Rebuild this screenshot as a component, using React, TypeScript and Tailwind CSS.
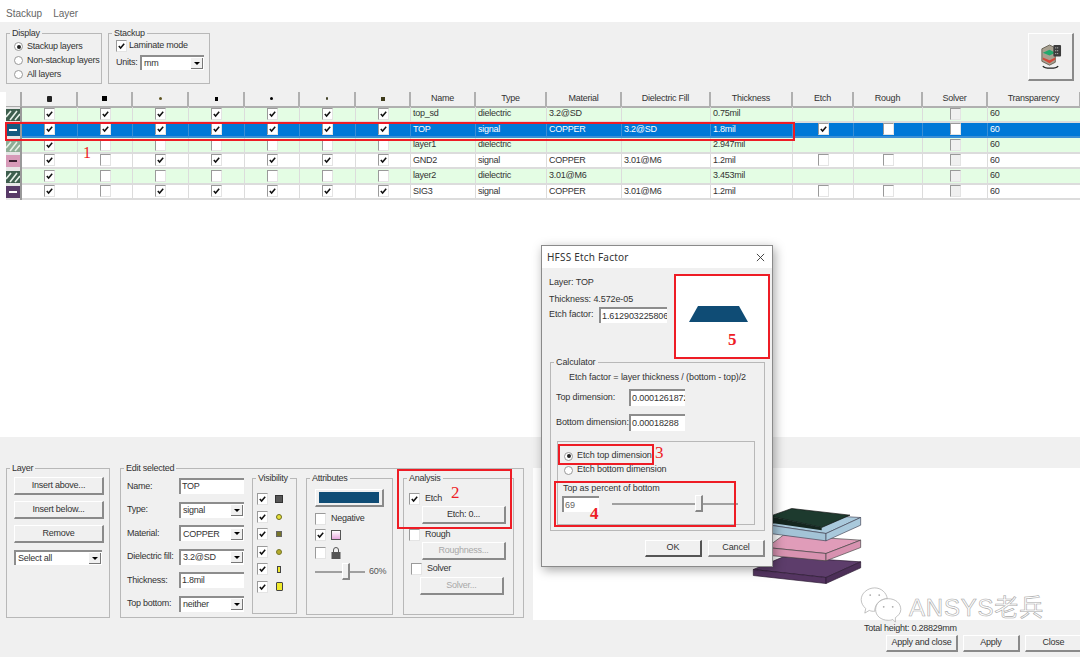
import React from 'react'

const columns = 'grid-cols-[16px_56px_55px_56px_56px_55px_56px_55px_65px_71px_75px_89px_82px_61px_69px_65px_93px]'

const rows = [
    { name: 'top_sd', type: 'dielectric', material: '3.2@SD', fill: '', thickness: '0.75mil', checks: [1, 1, 1, 1, 1, 1, 1] },
    { name: 'TOP', type: 'signal', material: 'COPPER', fill: '3.2@SD', thickness: '1.8mil', checks: [1, 1, 1, 1, 1, 1, 1], selected: true },
    { name: 'layer1', type: 'dielectric', material: '', fill: '', thickness: '2.947mil', checks: [1, 0, 0, 0, 0, 0, 0], light: true },
    { name: 'GND2', type: 'signal', material: 'COPPER', fill: '3.01@M6', thickness: '1.2mil', checks: [1, 0, 1, 1, 1, 1, 1], swatch: 'bg-[#d79ab8]' },
    { name: 'layer2', type: 'dielectric', material: '3.01@M6', fill: '', thickness: '3.453mil', checks: [1, 0, 0, 0, 0, 0, 0] },
    { name: 'SIG3', type: 'signal', material: 'COPPER', fill: '3.01@M6', thickness: '1.2mil', checks: [1, 0, 1, 1, 1, 1, 1], swatch: 'bg-[#583a68]', lightBar: true },
]

const Tick = () => (
    <svg viewBox="0 0 10 10" className="w-full h-full">
        <path d="M2 5l2 2.2L8 2.6" fill="none" stroke="#111" strokeWidth="1.7" />
    </svg>
)

const Check = ({ on = false, off = false }: { on?: boolean; off?: boolean }) => (
    <span className={`block w-[11px] h-[12px] shrink-0 border-t border-l border-r border-b border-t-[#9a9a9a] border-l-[#9a9a9a] border-r-[#e4e4e4] border-b-[#e4e4e4] ${off ? 'bg-[#f0f0f0]' : 'bg-white'}`}>
        {on && <Tick />}
    </span>
)

const Radio = ({ on = false }: { on?: boolean }) => (
    <span className="flex items-center justify-center w-[9px] h-[9px] shrink-0 rounded-full border border-[#999] bg-white">
        {on && <span className="block w-[4px] h-[4px] rounded-full bg-[#222]" />}
    </span>
)

const Btn = ({ children, className = '', off = false }: { children: React.ReactNode; className?: string; off?: boolean }) => (
    <div className={`flex items-center justify-center whitespace-nowrap bg-[#f0f0f0] border-t border-l border-r-2 border-b-2 border-t-white border-l-white border-r-[#8a8a8a] border-b-[#8a8a8a] ${off ? 'text-[#a8a8a8]' : 'text-[#333]'} ${className}`}>
        {children}
    </div>
)

const Field = ({ value, className = '' }: { value: string; className?: string }) => (
    <div className={`bg-white border-t-2 border-l-2 border-[#8d8d8d] pl-[1px] leading-[12px] overflow-hidden whitespace-nowrap text-[#333] ${className}`}>
        {value}
    </div>
)

const Select = ({ value, className = '' }: { value: string; className?: string }) => (
    <div className={`flex items-center bg-white border-t-2 border-l-2 border-[#8d8d8d] pl-[2px] text-[#333] ${className}`}>
        <span className="flex-1">{value}</span>
        <span className="flex items-center justify-center w-[12px] h-[11px] mr-[1px] bg-[#f0f0f0] border-r border-b border-[#777]">
            <span className="block w-0 h-0 border-x-[3px] border-t-[3px] border-x-transparent border-t-black" />
        </span>
    </div>
)

const Group = ({ title, className = '', children }: { title: string; className?: string; children: React.ReactNode }) => (
    <fieldset className={`border border-[#b8b8b8] ${className}`}>
        <legend className="ml-[3px] px-[2px] leading-[12px] text-[#333]">{title}</legend>
        {children}
    </fieldset>
)

const Slider = ({ className = '', thumb }: { className?: string; thumb: string }) => (
    <div className={`relative flex items-center ${className}`}>
        <div className="w-full h-[2px] bg-[#a0a0a0]" />
        <div className={`absolute top-0 w-[8px] h-[17px] bg-[#f0f0f0] border-r-2 border-b-2 border-[#888] border-t border-l border-t-white border-l-white ${thumb}`} />
    </div>
)

const Hatch = ({ light = false }: { light?: boolean }) => (
    <svg viewBox="0 0 14 12" className="w-[14px] h-[12px]">
        <rect width="14" height="12" fill={light ? '#8fae96' : '#3e5f4e'} />
        <path d="M0 8l5-6M4 11l7-9M9 11l5-6" stroke={light ? '#e6f2e6' : '#e8f2ea'} strokeWidth="1.6" />
    </svg>
)

const RowIcon = ({ row }: { row: (typeof rows)[number] }) => {
    if (row.type === 'dielectric') return <Hatch light={row.light} />
    const bg = row.selected ? 'bg-[#145a80]' : row.swatch
    const bar = row.selected || row.lightBar ? 'bg-white' : 'bg-[#3a2030]'
    return (
        <span className={`flex items-center justify-center w-[14px] h-[12px] ${bg}`}>
            <span className={`block w-[8px] h-[2px] ${bar}`} />
        </span>
    )
}

const headIcons = [
    'w-[5px] h-[6px] bg-[#222] rounded-[1px]',
    'w-[5px] h-[5px] bg-black',
    'w-[3px] h-[3px] bg-[#5f5420] rounded-full',
    'w-[3px] h-[4px] bg-black',
    'w-[3px] h-[3px] bg-black rounded-full',
    'w-[2px] h-[3px] bg-[#44442a] rounded-full',
    'w-[4px] h-[4px] bg-[#3e3a1a]',
]

const Table = () => (
    <div className="bg-white h-[345px] pl-[6px] text-[9px] text-[#333]">
        <div className={`grid ${columns} h-[15px]`}>
            <div className="bg-[#f0f0f0] border-r-2 border-b-2 border-[#aaa]" />
            {headIcons.map((c, i) => (
                <div key={i} className="flex items-center justify-center bg-[#f0f0f0] border-r-2 border-b-2 border-[#b0b0b0]">
                    <span className={`block ${c}`} />
                </div>
            ))}
            {['Name', 'Type', 'Material', 'Dielectric Fill', 'Thickness', 'Etch', 'Rough', 'Solver', 'Transparency'].map((h) => (
                <div key={h} className="flex items-center justify-center bg-[#f0f0f0] border-r-2 border-b-2 border-[#b0b0b0]">{h}</div>
            ))}
        </div>
        {rows.map((row) => {
            const bg = row.selected ? 'bg-[#0078d7] text-white' : row.type === 'dielectric' ? 'bg-[#e4fde4]' : 'bg-white'
            const cell = `flex items-center border-r border-b-2 ${row.selected ? 'border-[#3b8fd6]' : 'border-[#dcdcdc]'}`
            return (
                <div key={row.name} className={`grid ${columns} h-[15.5px] ${bg}`}>
                    <div className="flex items-center justify-center bg-[#e6e6e6] border-r-2 border-[#999]"><RowIcon row={row} /></div>
                    {row.checks.map((c, i) => (
                        <div key={i} className={`${cell} justify-center`}><Check on={!!c} /></div>
                    ))}
                    <div className={`${cell} pl-[2px]`}>{row.name}</div>
                    <div className={`${cell} pl-[2px]`}>{row.type}</div>
                    <div className={`${cell} pl-[2px]`}>{row.material}</div>
                    <div className={`${cell} pl-[2px]`}>{row.fill}</div>
                    <div className={`${cell} pl-[2px]`}>{row.thickness}</div>
                    <div className={`${cell} justify-center`}>{row.type === 'signal' && <Check on={row.selected} />}</div>
                    <div className={`${cell} justify-center`}>{row.type === 'signal' && <Check />}</div>
                    <div className={`${cell} justify-center`}><Check off={!row.selected} /></div>
                    <div className={`${cell} pl-[2px]`}>60</div>
                </div>
            )
        })}
    </div>
)

const TopBar = () => (
    <div className="flex items-start h-[70px] bg-[#f0f0f0] pl-[6px] pr-[6px] pt-[5px] gap-[6px] text-[9px] text-[#333] whitespace-nowrap">
        <Group title="Display" className="w-[96px] h-[57px]">
            <div className="flex flex-col gap-[3px] pl-[7px] pt-[2px]">
                <div className="flex items-center gap-[4px] h-[11px]"><Radio on />Stackup layers</div>
                <div className="flex items-center gap-[4px] h-[11px]"><Radio />Non-stackup layers</div>
                <div className="flex items-center gap-[4px] h-[11px]"><Radio />All layers</div>
            </div>
        </Group>
        <Group title="Stackup" className="w-[102px] h-[57px]">
            <div className="flex flex-col gap-[3px] pl-[7px] pt-[1px]">
                <div className="flex items-center gap-[2px] h-[12px]"><Check on />Laminate mode</div>
                <div className="flex items-center"><span className="w-[24px]">Units:</span><Select value="mm" className="w-[64px] h-[15px]" /></div>
            </div>
        </Group>
        <div className="ml-auto mt-[6px]">
            <Btn className="w-[46px] h-[48px]">
                <svg viewBox="0 0 24 28" className="w-[23px] h-[27px]">
                    <path d="M3 6l8-4 6 3v15l-6 3-8-4z" fill="#a8a090" stroke="#6a6458" />
                    <path d="M4 10l7-3 6 3-6 3z" fill="#23a86d" />
                    <path d="M4 15l7 3 6-3v2l-6 4-7-4z" fill="#d3493a" />
                    <rect x="15" y="2" width="8" height="12" rx="1" fill="#3c3c3c" />
                    <path d="M17 5h4M17 8h4M17 11h4" stroke="#ddd" strokeDasharray="1 1" />
                    <path d="M4 24c2 3 14 3 16 0" fill="none" stroke="#222" strokeWidth="1.3" />
                </svg>
            </Btn>
        </div>
    </div>
)

const LayerGroup = () => (
    <Group title="Layer" className="w-[104px] h-[156px]">
        <div className="flex flex-col gap-[6px] pl-[7px] pt-[3px]">
            <Btn className="w-[90px] h-[18px]">Insert above...</Btn>
            <Btn className="w-[90px] h-[18px]">Insert below...</Btn>
            <Btn className="w-[90px] h-[18px]">Remove</Btn>
            <Select value="Select all" className="w-[88px] h-[15px] mt-[1px]" />
        </div>
    </Group>
)

const editRows = [
    { label: 'Name:', value: 'TOP' },
    { label: 'Type:', value: 'signal', select: true },
    { label: 'Material:', value: 'COPPER', select: true },
    { label: 'Dielectric fill:', value: '3.2@SD', select: true },
    { label: 'Thickness:', value: '1.8mil' },
    { label: 'Top bottom:', value: 'neither', select: true },
]

const visIcons = [
    <span className="block w-[8px] h-[8px] bg-[#555] border border-[#333]" />,
    <span className="block w-[6px] h-[6px] bg-[#e6e03a] border border-[#6b6b20] rounded-full" />,
    <span className="block w-[6px] h-[6px] bg-[#77752a] border border-[#666]" />,
    <span className="block w-[6px] h-[6px] bg-[#b5ab2a] border border-[#77772a] rounded-full" />,
    <span className="block w-[4px] h-[7px] bg-[#f0ea2a] border border-[#444]" />,
    <span className="block w-[7px] h-[9px] bg-[#f0ea2a] border border-[#444] rounded-[1px]" />,
]

const EditGroup = () => (
    <Group title="Edit selected" className="w-[404px] h-[156px]">
        <div className="flex">
            <div className="flex flex-col gap-[7px] w-[131px] shrink-0 pl-[6px] pt-[4px]">
                {editRows.map((r) => (
                    <div key={r.label} className="flex items-center h-[16.5px] whitespace-nowrap">
                        <span className="w-[52px] shrink-0">{r.label}</span>
                        {r.select
                            ? <Select value={r.value} className="w-[65px] h-[16px]" />
                            : <Field value={r.value} className="w-[65px] h-[16px]" />}
                    </div>
                ))}
            </div>
            <Group title="Visibility" className="w-[45px] h-[142px] shrink-0 -mt-[2px]">
                <div className="flex flex-col gap-[5.6px] pl-[4px] pt-[9px]">
                    {visIcons.map((icon, i) => (
                        <div key={i} className="flex items-center gap-[6px] h-[12px]">
                            <Check on />
                            <span className="flex items-center justify-center w-[10px]">{icon}</span>
                        </div>
                    ))}
                </div>
            </Group>
            <Group title="Attributes" className="w-[87px] h-[143px] shrink-0 ml-[9px] -mt-[2px]">
                <div className="flex flex-col pl-[8px] pt-[5px]">
                    <Btn className="w-[69px] h-[18px]"><span className="block w-[60px] h-[11px] bg-[#0f4c75]" /></Btn>
                    <div className="flex items-center gap-[5px] h-[12px] mt-[6px] text-[9px]"><Check />Negative</div>
                    <div className="flex items-center gap-[5px] h-[12px] mt-[4px]">
                        <Check on />
                        <span className="block w-[10px] h-[10px] border border-[#555] bg-gradient-to-b from-white to-[#e9a9e0]" />
                    </div>
                    <div className="flex items-center gap-[5px] h-[12px] mt-[6px]">
                        <Check />
                        <svg viewBox="0 0 10 12" className="w-[10px] h-[12px]">
                            <path d="M2.5 5V3a2.5 2.5 0 015 0v2" fill="none" stroke="#555" />
                            <rect x="0.5" y="5" width="9" height="7" fill="#555" />
                        </svg>
                    </div>
                    <div className="flex items-center gap-[4px] mt-[4px]">
                        <Slider className="w-[50px] h-[17px]" thumb="left-[27px]" />
                        <span className="text-[#555]">60%</span>
                    </div>
                </div>
            </Group>
            <Group title="Analysis" className="w-[111px] h-[143px] shrink-0 ml-[10px] -mt-[2px]">
                <div className="flex flex-col pl-[5px] pt-[9px]">
                    <div className="flex items-center gap-[5px] h-[12px]"><Check on />Etch</div>
                    <Btn className="w-[84px] h-[18px] ml-[13px] mt-[1px]">Etch: 0...</Btn>
                    <div className="flex items-center gap-[5px] h-[12px] mt-[5px]"><Check />Rough</div>
                    <Btn off className="w-[84px] h-[18px] ml-[13px] mt-[1px]">Roughness...</Btn>
                    <div className="flex items-center gap-[5px] h-[12px] mt-[3px] ml-[2px]"><Check />Solver</div>
                    <Btn off className="w-[84px] h-[18px] ml-[11px] mt-[2px]">Solver...</Btn>
                </div>
            </Group>
        </div>
    </Group>
)

const StackPreview = () => (
    <svg viewBox="0 0 375 290" className="w-[125px] h-[97px] ml-[207px] mt-[22px]">
        <path d="M40 238L130 200L362 215L258 262Z" fill="#5d3d6b" stroke="#2a1a30" strokeWidth="2" />
        <path d="M40 238L258 262V280L40 256Z" fill="#553562" stroke="#2a1a30" strokeWidth="2" />
        <path d="M258 262L362 215V233L258 280Z" fill="#4c2f58" stroke="#2a1a30" strokeWidth="2" />
        <path d="M80 172L130 135L362 150L258 190Z" fill="#e09cb9" stroke="#444" strokeWidth="2" />
        <path d="M80 172L258 190V212L80 195Z" fill="#d892b0" stroke="#444" strokeWidth="2" />
        <path d="M258 190L362 150V172L258 212Z" fill="#d892b0" stroke="#444" strokeWidth="2" />
        <path d="M90 105L155 70L362 82L258 130Z" fill="#a9c9dc" stroke="#445" strokeWidth="2" />
        <path d="M90 105L258 130V152L90 130Z" fill="#a3c3d6" stroke="#445" strokeWidth="2" />
        <path d="M258 130L362 82V105L258 152Z" fill="#a9c9dc" stroke="#445" strokeWidth="2" />
        <path d="M90 78L155 55L330 75L245 112Z" fill="#1d3a2e" stroke="#111" strokeWidth="2" />
        <path d="M90 78L245 112V120L90 98Z" fill="#14261f" />
    </svg>
)

const Dialog = () => (
    <div className="absolute left-[541px] top-[245px] w-[232px] h-[322px] flex flex-col border border-[#8a8a8a] bg-[#f0f0f0] shadow-[2px_3px_10px_rgba(0,0,0,0.35)] text-[9px] tracking-[-0.1px] text-[#333] whitespace-nowrap">
        <div className="flex items-center justify-between h-[22px] bg-white pl-[5px] pr-[7px] text-[10px] tracking-[0.2px] font-['Noto_Sans',sans-serif]">
            HFSS Etch Factor
            <svg viewBox="0 0 10 10" className="w-[9px] h-[9px]"><path d="M1 1l8 8M9 1l-8 8" stroke="#333" strokeWidth="1" /></svg>
        </div>
        <div className="flex h-[86px]">
            <div className="flex flex-col w-[133px] pl-[7px] pt-[8px]">
                <div className="h-[17px]">Layer: TOP</div>
                <div className="h-[14px]">Thickness: 4.572e-05</div>
                <div className="flex items-center"><span className="w-[50px] shrink-0">Etch factor:</span><Field value="1.612903225806" className="w-[68px] h-[16px] pt-[1px]" /></div>
            </div>
            <div className="w-[93px] h-[83px] mt-[7px] bg-white">
                <svg viewBox="0 0 93 83" className="w-full h-full">
                    <path d="M14 47L23 31H64L73 47Z" fill="#0f4c75" />
                </svg>
            </div>
        </div>
        <div className="px-[8px] mt-[2px]">
            <Group title="Calculator" className="w-[215px] h-[175px]">
                <div className="pl-[18px] pt-[3px] h-[21px]">Etch factor = layer thickness / (bottom - top)/2</div>
                <div className="flex items-center h-[17px] pl-[5px]">
                    <span className="w-[73px] shrink-0">Top dimension:</span>
                    <Field value="0.0001261872" className="w-[56px] h-[17px] pt-[1px]" />
                </div>
                <div className="flex items-center h-[17px] pl-[5px] mt-[8px]">
                    <span className="w-[73px] shrink-0">Bottom dimension:</span>
                    <Field value="0.00018288" className="w-[56px] h-[17px] pt-[1px]" />
                </div>
                <div className="w-[198px] h-[84px] ml-[6px] mt-[10px] border border-[#b8b8b8]">
                    <div className="flex items-center gap-[4px] h-[12px] ml-[6px] mt-[8px]"><Radio on />Etch top dimension</div>
                    <div className="flex items-center gap-[4px] h-[12px] ml-[6px] mt-[2px]"><Radio />Etch bottom dimension</div>
                    <div className="ml-[5px] mt-[6px] h-[11px]">Top as percent of bottom</div>
                    <div className="flex items-center ml-[4px] mt-[2px]">
                        <Field value="69" className="w-[37px] h-[16px] pt-[1px] text-[#666]" />
                        <Slider className="w-[126px] h-[18px] ml-[13px]" thumb="left-[83px]" />
                    </div>
                </div>
            </Group>
        </div>
        <div className="flex gap-[6px] pl-[103px] mt-[9px]">
            <Btn className="w-[57px] h-[17px] border-t-[#555] border-l-[#555] border-r-[#555] border-b-[#555]">OK</Btn>
            <Btn className="w-[57px] h-[17px]">Cancel</Btn>
        </div>
    </div>
)

const Marks = () => (
    <>
        <div className="absolute left-[5px] top-[122px] w-[790px] h-[19px] border-2 border-[#ee1c25]" />
        <div className="absolute left-[397px] top-[469px] w-[115px] h-[60px] border-2 border-[#ee1c25]" />
        <div className="absolute left-[674px] top-[274px] w-[96px] h-[85px] border-2 border-[#ee1c25]" />
        <div className="absolute left-[558px] top-[444px] w-[96px] h-[21px] border-2 border-[#ee1c25]" />
        <div className="absolute left-[554px] top-[481px] w-[182px] h-[46px] border-2 border-[#ee1c25]" />
        <span className="absolute left-[83px] top-[144px] text-[16px] leading-[18px] font-['Liberation_Serif',serif] text-[#ee1c25]">1</span>
        <span className="absolute left-[451px] top-[483px] text-[17px] leading-[20px] font-['Liberation_Serif',serif] text-[#ee1c25]">2</span>
        <span className="absolute left-[655px] top-[443px] text-[17px] leading-[20px] font-['Liberation_Serif',serif] text-[#ee1c25]">3</span>
        <span className="absolute left-[590px] top-[504px] text-[17px] leading-[20px] font-bold font-['Liberation_Serif',serif] text-[#ee1c25]">4</span>
        <span className="absolute left-[728px] top-[330px] text-[17px] leading-[20px] font-bold font-['Liberation_Serif',serif] text-[#ee1c25]">5</span>
    </>
)

const Watermark = () => (
    <div className="absolute left-[859px] top-[587px] flex items-center gap-[6px]">
        <svg viewBox="0 0 46 40" className="w-[44px] h-[36px]">
            <path d="M16 1C8 1 1 7 1 14c0 4 2 7 5 10l-1 5 5-3c2 1 4 1 6 1 0-8 6-14 14-14C29 6 23 1 16 1z" fill="white" stroke="#aaa" strokeWidth="0.8" />
            <path d="M31 13c-8 0-14 5-14 12s6 12 14 12c2 0 3 0 5-1l3 3v-5c3-2 6-5 6-9 0-7-6-12-14-12z" fill="white" stroke="#aaa" strokeWidth="0.8" />
            <circle cx="11" cy="9" r="1" fill="#aaa" /><circle cx="21" cy="9" r="1" fill="#aaa" />
            <circle cx="26" cy="22" r="1" fill="#aaa" /><circle cx="36" cy="22" r="1" fill="#aaa" />
        </svg>
        <span className="text-[24px] leading-[26px] mt-[6px] tracking-[0.8px] text-white [-webkit-text-stroke:0.6px_#a8a8a8] font-['Liberation_Sans','Noto_Sans_CJK_SC',sans-serif]">ANSYS老兵</span>
    </div>
)

const App = () => (
    <div className="relative w-[1080px] h-[657px] overflow-hidden bg-white font-['Liberation_Sans',sans-serif] text-[9px] tracking-[-0.25px]">
        <div className="flex items-end gap-[11px] h-[22px] pl-[6px] pb-[1px] text-[10px] tracking-normal text-[#666]">
            <span>Stackup</span>
            <span>Layer</span>
        </div>
        <TopBar />
        <Table />
        <div className="flex h-[183px] text-[#333]">
            <div className="flex items-start w-[533px] bg-[#f0f0f0] pl-[6px] pt-[25px] gap-[10px]">
                <LayerGroup />
                <EditGroup />
            </div>
            <div className="flex flex-col flex-1">
                <div className="h-[31px] bg-[#f0f0f0] shrink-0" />
                <StackPreview />
            </div>
        </div>
        <div className="flex flex-col h-[37px] bg-[#f0f0f0] text-[#333]">
            <div className="pl-[864px] pt-[2px] h-[15px]">Total height: 0.28829mm</div>
            <div className="flex justify-end gap-[5px] -mr-[3px]">
                <Btn className="w-[72px] h-[17px]">Apply and close</Btn>
                <Btn className="w-[57px] h-[17px]">Apply</Btn>
                <Btn className="w-[58px] h-[17px]">Close</Btn>
            </div>
        </div>
        <Dialog />
        <Watermark />
        <Marks />
    </div>
)

export default App
